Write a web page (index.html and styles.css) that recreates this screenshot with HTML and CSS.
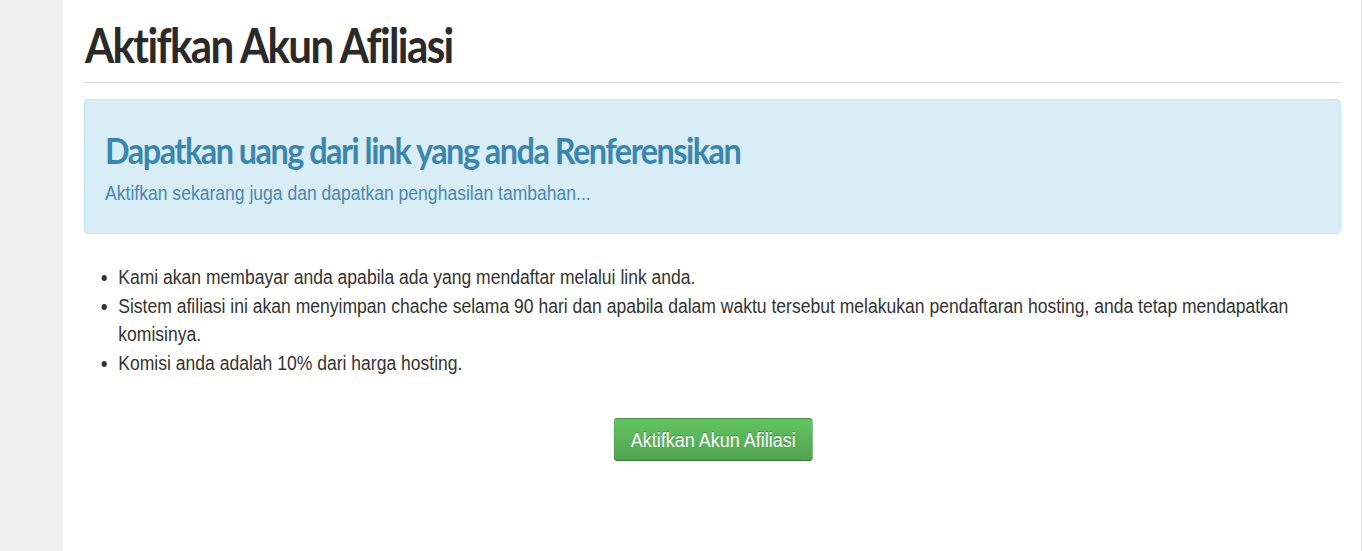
FILE: index.html
```html
<!DOCTYPE html>
<html lang="id">
<head>
<meta charset="utf-8">
<title>Aktifkan Akun Afiliasi</title>
<link rel="stylesheet" href="styles.css">
</head>
<body>
<div class="layout">
  <aside class="sidebar"></aside>
  <main class="content">
    <div class="page">
      <h1 class="page-title">Aktifkan Akun Afiliasi</h1>
      <div class="alert">
        <h2 class="alert-heading">Dapatkan uang dari link yang anda Renferensikan</h2>
        <p class="alert-text">Aktifkan sekarang juga dan dapatkan penghasilan tambahan...</p>
      </div>
      <ul class="info-list">
        <li>Kami akan membayar anda apabila ada yang mendaftar melalui link anda.</li>
        <li>Sistem afiliasi ini akan menyimpan chache selama 90 hari dan apabila dalam waktu tersebut melakukan pendaftaran hosting, anda tetap mendapatkan komisinya.</li>
        <li>Komisi anda adalah 10% dari harga hosting.</li>
      </ul>
      <div class="actions">
        <button class="btn-success" type="button">Aktifkan Akun Afiliasi</button>
      </div>
    </div>
  </main>
  <div class="edge"></div>
</div>
</body>
</html>
```

FILE: styles.css
```css
html, body {
  margin: 0;
  padding: 0;
  height: 100%;
  background: #ffffff;
  overflow: hidden;
}
body {
  font-family: "Liberation Sans", Arial, Helvetica, sans-serif;
  color: #333333;
}
.layout {
  display: flex;
  min-height: 551px;
}
.sidebar {
  width: 63px;
  flex: none;
  background: #efefef;
}
.content {
  flex: 1;
  min-width: 0;
  background: #ffffff;
  overflow: hidden;
}
/* the page is drawn narrow: laid out wide, then compressed horizontally */
.page {
  width: calc(100% / 0.877);
  box-sizing: border-box;
  padding: 0 23px 0 24px;
  transform: scaleX(0.877);
  transform-origin: 0 0;
}
.edge {
  width: 2px;
  flex: none;
  background: #ffffff;
  border-left: 1px solid #e4e4e4;
}
.page-title {
  margin: 0;
  padding: 18px 0 11px 1px;
  font-family: Lato, "Open Sans", sans-serif;
  font-weight: bold;
  font-size: 48px;
  line-height: 53px;
  letter-spacing: -1.85px;
  color: #2a2a2a;
  border-bottom: 1px solid #dddddd;
}
.alert {
  margin-top: 16px;
  background: #d9edf7;
  border: 1px solid #bce8f1;
  border-radius: 4px;
  padding: 30px 23px 26px 23px;
  color: #3a87ad;
}
.alert-heading {
  margin: 0;
  font-family: Lato, "Open Sans", sans-serif;
  font-weight: bold;
  font-size: 37px;
  line-height: 40px;
  letter-spacing: -1.75px;
  color: #3c86ae;
}
.alert-text {
  margin: 9px 0 0 0;
  font-size: 20px;
  line-height: 28px;
  color: #4a87b0;
}
.info-list {
  margin: 29px 0 0 0;
  padding-left: 39px;
  font-size: 20px;
  line-height: 28.57px;
  color: #333333;
}
.actions {
  display: flex;
  justify-content: center;
  margin-top: 41px;
}
.btn-success {
  font-family: "Liberation Sans", Arial, sans-serif;
  font-size: 20.5px;
  color: #ffffff;
  width: 227px;
  height: 43px;
  padding: 0;
  margin-left: 2px;
  border: 1px solid;
  border-color: rgba(0,0,0,0.1) rgba(0,0,0,0.1) rgba(0,0,0,0.25);
  border-radius: 4px;
  background: linear-gradient(#62c462, #51a351);
  box-shadow: inset 0 1px 0 rgba(255,255,255,0.2), 0 1px 2px rgba(0,0,0,0.05);
  text-shadow: 0 -1px 0 rgba(0,0,0,0.25);
  cursor: pointer;
}
```
